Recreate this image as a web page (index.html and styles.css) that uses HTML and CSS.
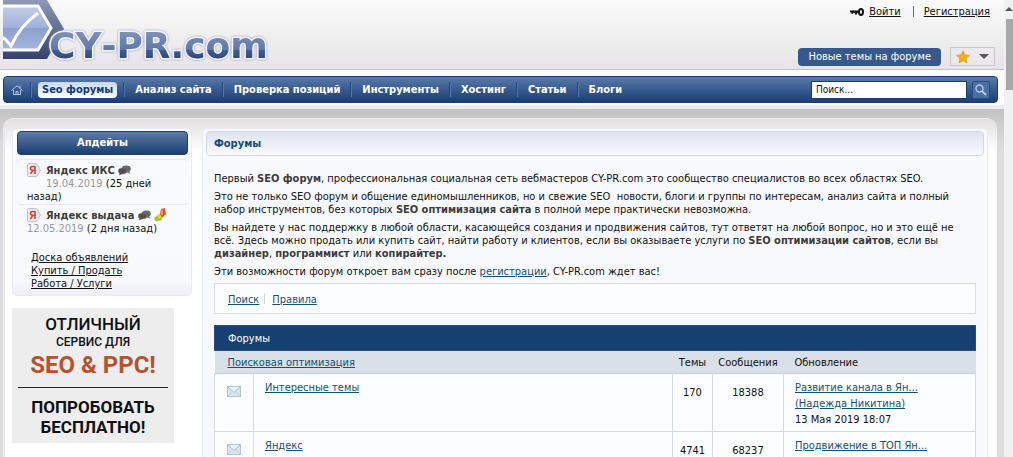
FILE: index.html
```html
<!DOCTYPE html>
<html lang="ru">
<head>
  <meta charset="UTF-8">
  <meta name="viewport" content="width=device-width, initial-scale=1.0">
  <title>SEO форум - CY-PR.com</title>
  <link rel="stylesheet" href="styles.css">
</head>
<body>

  <!-- Shared icons -->
  <svg class="sprite" aria-hidden="true">
    <symbol id="icon-yandex" viewBox="0 0 14 14">
      <path d="M.5 1.5Q.5.5 1.500.5H9.500L13.500 7L9.500 13.500H1.500Q.5 13.500.5 12.500Z" fill="#ececec" stroke="#c2c2c2"/>
      <path d="M8 3v8M8 3.500H5.500Q3.500 3.600 3.500 5.300T5.500 7.200H8M5.800 7.300L3.500 11" fill="none" stroke="#d8403c" stroke-width="1.600"/>
    </symbol>
    <symbol id="icon-talk" viewBox="0 0 13 11">
      <ellipse cx="8.300" cy="3.800" rx="4.500" ry="3.400" fill="#666"/>
      <path d="M10 5l2.500 4l-4-2z" fill="#666"/>
      <ellipse cx="4.600" cy="6" rx="4.400" ry="3" fill="#505050" stroke="#888" stroke-width=".5"/>
      <path d="M2 7.500L1 10.500L5 8.500z" fill="#505050"/>
    </symbol>
    <symbol id="icon-mail" viewBox="0 0 14 11">
      <rect x=".5" y=".5" width="13" height="10" fill="#dbe5f0" stroke="#b4c3d5"/>
      <path d="M1 1l6 5.500L13 1" fill="#edf3fa" stroke="#a8b9cd"/>
      <path d="M1 10l4.500-4.500M13 10L8.500 5.500" stroke="#c0cddd"/>
    </symbol>
  </svg>

  <div class="page">
    <header class="header">
      <a class="logo" href="#" aria-label="CY-PR.com">
        <svg width="276" height="64" viewBox="0 0 276 64">
          <defs>
            <linearGradient id="frame" x1="0" y1="0" x2="0" y2="1">
              <stop offset="0" stop-color="#8e99b8"/>
              <stop offset="1" stop-color="#34416b"/>
            </linearGradient>
            <linearGradient id="glass" x1="0" y1="0" x2="0" y2="1">
              <stop offset="0" stop-color="#c3cfe8"/>
              <stop offset=".5" stop-color="#9fb1da"/>
              <stop offset=".5" stop-color="#8c9fcd"/>
              <stop offset="1" stop-color="#a5b7df"/>
            </linearGradient>
            <linearGradient id="letters" x1="0" y1="0" x2="0" y2="1">
              <stop offset=".2" stop-color="#7d90b4"/>
              <stop offset=".6" stop-color="#5d78aa"/>
              <stop offset=".62" stop-color="#3f5c94"/>
              <stop offset=".85" stop-color="#2f4678"/>
            </linearGradient>
            <clipPath id="edge"><path d="M3 0H276V64H3Z"/></clipPath>
          </defs>
          <g clip-path="url(#edge)">
            <path d="M3 0H47L64 29L47 59H3Z" fill="url(#frame)"/>
            <path d="M-4 6H38L51 28L38 50H-4Z" fill="url(#glass)" stroke="#fff" stroke-width="3"/>
            <path d="M1 37L5 39L11 46Q20 26 38 13" fill="none" stroke="#fff" stroke-width="3"/>
          </g>
          <text class="logo-text" x="49" y="58" fill="url(#letters)">CY-PR.com</text>
        </svg>
      </a>
      <div class="header-right">
        <div class="login">
          <svg width="14" height="8" viewBox="0 0 14 8" aria-hidden="true">
            <path d="M0 2.500H9V5H7V6.500H5V5H3V6H1.500V4.500H0Z" fill="#111"/>
            <ellipse cx="11" cy="4" rx="2" ry="3" fill="none" stroke="#111" stroke-width="2"/>
          </svg>
          <a href="#">Войти</a>
          <span class="login-sep"></span>
          <a href="#">Регистрация</a>
        </div>
        <div class="header-tools">
          <button class="new-topics">Новые темы на форуме</button>
          <button class="bookmark" aria-label="В закладки">
            <svg width="14" height="14" viewBox="0 0 14 14" aria-hidden="true">
              <path d="M7 .8L8.900 4.900L13.400 5.400L10.100 8.500L11 13L7 10.700L3 13L3.900 8.500L.6 5.400L5.100 4.900Z" fill="#f5ad1b" stroke="#e79a25" stroke-width=".8"/>
            </svg>
            <svg width="10" height="5" viewBox="0 0 10 5" aria-hidden="true"><path d="M0 0H10L5 5Z" fill="#555"/></svg>
          </button>
        </div>
      </div>
    </header>

    <div class="nav-wrap">
      <nav class="nav">
        <a class="nav-home" href="#" aria-label="Главная">
          <svg width="12" height="10" viewBox="0 0 12 10" aria-hidden="true">
            <path d="M.5 5.500L6 .8L11.500 5.500M2.500 5V9.500H9.500V5M5 9.500V6.500H7V9.500M9 2.800V.5" fill="none" stroke="#b8c8e2"/>
          </svg>
        </a>
        <a class="active" href="#"><span>Seo форумы</span></a>
        <a href="#">Анализ сайта</a>
        <a href="#">Проверка позиций</a>
        <a href="#">Инструменты</a>
        <a href="#">Хостинг</a>
        <a href="#">Статьи</a>
        <a href="#">Блоги</a>
        <form class="search">
          <input type="text" value="Поиск..." aria-label="Поиск">
          <button type="button" aria-label="Найти">
            <svg width="12" height="12" viewBox="0 0 12 12" aria-hidden="true">
              <circle cx="4.500" cy="4.500" r="3.500" fill="none" stroke="#b4c9e6" stroke-width="1.400"/>
              <path d="M7 7l4 4" stroke="#b4c9e6" stroke-width="2"/>
            </svg>
          </button>
        </form>
      </nav>
    </div>

    <div class="backdrop">
      <div class="content">
        <aside class="sidebar">
          <section class="panel updates">
            <h2>Апдейты</h2>
            <div class="update update-tic">
              <div class="update-title">
                <svg width="14" height="14"><use href="#icon-yandex"/></svg>
                <strong>Яндекс ИКС</strong>
                <svg width="13" height="11"><use href="#icon-talk"/></svg>
              </div>
              <p><time>19.04.2019</time> (25 дней назад)</p>
            </div>
            <div class="update">
              <div class="update-title">
                <svg width="14" height="14"><use href="#icon-yandex"/></svg>
                <strong>Яндекс выдача</strong>
                <svg width="13" height="11"><use href="#icon-talk"/></svg>
                <svg width="12" height="14" viewBox="0 0 12 14" aria-hidden="true">
                  <path d="M1 9L7 6L8 12L2 13.500L0 11Z" fill="#a9c32b"/>
                  <path d="M3 7L7 5L8 9L5 11Z" fill="#f3cf2a"/>
                  <path d="M7 1L11 0L12 6L8 10L6 6Z" fill="#e1532c"/>
                  <path d="M7 2L9 1.500L9 7L7 7Z" fill="#f59a3a"/>
                </svg>
              </div>
              <p><time>12.05.2019</time> (2 дня назад)</p>
            </div>
            <div class="board-links">
              <a href="#">Доска объявлений</a>
              <a href="#">Купить / Продать</a>
              <a href="#">Работа / Услуги</a>
            </div>
          </section>

          <a class="banner" href="#">
            <span class="banner-top">ОТЛИЧНЫЙ</span>
            <span class="banner-small">СЕРВИС ДЛЯ</span>
            <span class="banner-big">SEO &amp; PPC!</span>
            <span class="banner-call">ПОПРОБОВАТЬ БЕСПЛАТНО!</span>
          </a>
        </aside>

        <main class="panel main">
          <h1>Форумы</h1>
          <div class="main-body">
            <div class="intro">
              <p>Первый <strong>SEO форум</strong>, профессиональная социальная сеть вебмастеров CY-PR.com это сообщество специалистов во всех областях SEO.</p>
              <p>Это не только SEO форум и общение единомышленников, но и свежие SEO&nbsp; новости, блоги и группы по интересам, анализ сайта и полный набор инструментов, без которых <strong>SEO оптимизация сайта</strong> в полной мере практически невозможна.</p>
              <p>Вы найдете у нас поддержку в любой области, касающейся создания и продвижения сайтов, тут ответят на любой вопрос, но и это ещё не всё. Здесь можно продать или купить сайт, найти работу и клиентов, если вы оказываете услуги по <strong>SEO оптимизации сайтов</strong>, если вы <strong>дизайнер</strong>, <strong>программист</strong> или <strong>копирайтер.</strong></p>
              <p>Эти возможности форум откроет вам сразу после <a href="#">регистрации</a>, CY-PR.com ждет вас!</p>
            </div>

            <div class="forum-links">
              <a href="#">Поиск</a>
              <a href="#">Правила</a>
            </div>

            <table class="forums">
              <colgroup>
                <col class="col-icon">
                <col>
                <col class="col-topics">
                <col class="col-posts">
                <col class="col-last">
              </colgroup>
              <thead>
                <tr class="forums-title">
                  <th colspan="5">Форумы</th>
                </tr>
                <tr class="forums-head">
                  <th colspan="2"><a href="#">Поисковая оптимизация</a></th>
                  <th class="num">Темы</th>
                  <th class="num">Сообщения</th>
                  <th>Обновление</th>
                </tr>
              </thead>
              <tbody>
                <tr>
                  <td class="icon"><svg width="14" height="11"><use href="#icon-mail"/></svg></td>
                  <td><a href="#">Интересные темы</a></td>
                  <td class="num">170</td>
                  <td class="num">18388</td>
                  <td><a href="#">Развитие канала в Ян...</a><br><a href="#">(Надежда Никитина)</a><br>13 Мая 2019 18:07</td>
                </tr>
                <tr>
                  <td class="icon"><svg width="14" height="11"><use href="#icon-mail"/></svg></td>
                  <td><a href="#">Яндекс</a></td>
                  <td class="num">4741</td>
                  <td class="num">68237</td>
                  <td><a href="#">Продвижение в ТОП Ян...</a><br><a href="#">(</a></td>
                </tr>
              </tbody>
            </table>
          </div>
        </main>
      </div>
    </div>
  </div>

  <div class="scrollbar" aria-hidden="true">
    <div class="scroll-arrow"></div>
    <div class="scroll-thumb"></div>
  </div>

</body>
</html>
```
FILE: styles.css
```css
body {
  margin: 0;
  display: flex;
  height: 100vh;
  overflow: hidden;
  background: #fff;
  color: #111;
  font-family: Tahoma, "DejaVu Sans Condensed", "DejaVu Sans", sans-serif;
  font-size: 11px;
  line-height: 13px;
}

* {
  box-sizing: border-box;
}

.sprite {
  display: none;
}

input,
button {
  font: inherit;
}

p,
h1,
h2 {
  margin: 0;
}

.page {
  flex: 1;
  min-width: 0;
  display: flex;
  flex-direction: column;
}

/* Header */
.header {
  display: flex;
  justify-content: space-between;
  height: 70px;
  flex: none;
  border-bottom: 1px solid #c3c2c5;
  background: linear-gradient(#fbfbfb, #e6e4e6);
}

.logo svg {
  display: block;
}

.logo-text {
  font-family: Verdana, "DejaVu Sans", sans-serif;
  font-size: 36px;
  font-weight: bold;
  font-kerning: none;
  stroke: #f4f5fa;
  stroke-width: 3px;
  paint-order: stroke;
  filter: drop-shadow(0 0 1px #8d9ab8);
}

.header-right {
  display: flex;
  flex-direction: column;
  justify-content: space-between;
  align-items: flex-end;
  padding: 5px 9px 3px 0;
}

.login {
  display: flex;
  align-items: center;
  padding-right: 5px;
}

.login a {
  color: #111;
  margin-left: 5px;
}

.login-sep {
  width: 1px;
  height: 11px;
  margin: 0 5px 0 12px;
  background: #667;
}

.header-tools {
  display: flex;
  align-items: center;
  gap: 9px;
}

.new-topics {
  height: 18px;
  padding: 0 10px;
  border: 0;
  border-radius: 4px;
  background: #36588c;
  color: #fff;
}

.bookmark {
  display: flex;
  align-items: center;
  justify-content: space-between;
  width: 45px;
  height: 19px;
  padding: 0 5px;
  border: 1px solid #c9c9c9;
  background: #ebe9eb;
}

/* Navigation */
.nav-wrap {
  padding: 6px 6px 2px 3px;
  border-bottom: 4px solid #ebecef;
}

.nav {
  display: flex;
  align-items: center;
  height: 27px;
  border: 1px solid #1b3d70;
  border-radius: 4px;
  background: linear-gradient(#5c7ba6, #3a5d93 45%, #1b3f74);
}

.nav > a {
  padding: 1px 10px 1px 11px;
  border-left: 1px solid #24477b;
  box-shadow: inset 1px 0 #55759f;
  color: #fff;
  font-weight: bold;
  text-decoration: none;
  white-space: nowrap;
}

.nav > .nav-home {
  display: flex;
  padding: 0 7px;
  border: 0;
  box-shadow: none;
}

.nav > .active {
  padding: 0 6px 0 7px;
}

.active span {
  display: block;
  padding: 1px 4px 2px;
  border-radius: 4px;
  background: linear-gradient(#c9d8ea, #fff);
  color: #153c70;
}

.search {
  display: flex;
  gap: 5px;
  margin: 0 7px 0 auto;
}

.search input {
  width: 156px;
  height: 18px;
  padding: 0 4px;
  border: 1px solid #1b3b6b;
  background: #fff;
  color: #111;
  font-size: 10px;
}

.search button {
  display: flex;
  align-items: center;
  justify-content: center;
  width: 18px;
  height: 18px;
  padding: 0;
  border: 1px solid #294e83;
  border-radius: 2px;
  background: #4b6ea3;
}

/* Content area */
.backdrop {
  flex: 1;
  min-height: 0;
  padding: 9px 7px 0 3px;
  background: linear-gradient(#c2c2c2, #dedede 40px);
}

.content {
  display: flex;
  align-items: flex-start;
  gap: 10px;
  min-height: 100%;
  padding: 9px 9px 0;
  border: 2px solid #eaeaea;
  border-width: 1px 0 0 2px;
  border-radius: 10px 10px 0 0;
  background: linear-gradient(#e2dfe0, #fff 32px);
}

.panel {
  border: 1px solid #e8ebf5;
  border-radius: 5px;
  background: #f8f9fd;
}

.sidebar {
  flex: none;
  width: 180px;
  margin-left: -2px;
}

.updates {
  padding: 2px 3px 5px 4px;
  background: linear-gradient(#fff, #f9fafd 30px, #f8f9fd 150px, #edf0f8);
}

.updates h2 {
  height: 24px;
  border: 1px solid #1b3d70;
  border-radius: 4px;
  background: linear-gradient(#5c7ba6, #1b3f74);
  color: #fff;
  font-size: 11px;
  line-height: 22px;
  text-align: center;
}

.update {
  padding: 3px 10px 1px;
}

.update-tic {
  margin-top: 4px;
  border-top: 1px solid #e6e9f4;
  border-bottom: 1px solid #e6e9f4;
  border-radius: 4px;
}

.update-title {
  display: flex;
  align-items: center;
  height: 14px;
  gap: 3px;
}

.update-title strong {
  margin-left: 2px;
}

.update-tic p {
  text-indent: 19px;
}

.update time {
  color: #999;
}

strong {
  color: #3c3c3c;
}

.board-links {
  display: flex;
  flex-direction: column;
  align-items: flex-start;
  padding: 15px 14px 0;
}

.board-links a {
  color: #111;
}

/* Banner */
.banner {
  display: flex;
  flex-direction: column;
  align-items: center;
  width: 162px;
  height: 135px;
  margin-top: 12px;
  padding: 6px;
  background: #ededed;
  color: #111;
  font-family: Roboto, sans-serif;
  text-align: center;
  text-decoration: none;
}

.banner-top {
  font-size: 17px;
  font-weight: 500;
  line-height: 20px;
}

.banner-small {
  font-size: 12px;
  font-weight: 500;
  line-height: 16px;
}

.banner-big {
  color: #b5532f;
  font-size: 24px;
  font-weight: bold;
  line-height: 30px;
}

.banner-call {
  margin-top: 7px;
  padding-top: 9px;
  border-top: 1px solid #222;
  font-size: 17px;
  font-weight: bold;
  line-height: 20px;
}

/* Forum panel */
.main {
  flex: 1;
  min-width: 0;
  padding: 2px 3px;
}

.main h1 {
  height: 25px;
  padding: 0 7px;
  border: 1px solid #d2d8e8;
  border-radius: 4px;
  background: linear-gradient(#dfe3f0, #f8faff);
  color: #17497b;
  font-size: 11px;
  line-height: 23px;
}

.main-body {
  padding: 16px 8px;
}

.main a {
  color: #17506f;
}

.intro {
  margin-right: 12px;
}

.intro p {
  margin-bottom: 5px;
}

.forum-links {
  display: flex;
  height: 31px;
  padding: 9px 13px;
  border: 1px solid #d8dde6;
  background: #fcfdff;
}

.forum-links a + a {
  margin-left: 5px;
  padding-left: 7px;
  border-left: 1px solid #d0d7e0;
}

/* Forum list */
.forums {
  width: 100%;
  margin-top: 11px;
  border-collapse: collapse;
  table-layout: fixed;
  background: #fbfdff;
}

.col-icon {
  width: 39px;
}

.col-topics {
  width: 40px;
}

.col-posts {
  width: 71px;
}

.col-last {
  width: 192px;
}

.forums th {
  padding: 0 11px;
  font-weight: normal;
  text-align: left;
}

.forums-title th {
  height: 25px;
  padding: 0 13px;
  border: 1px solid #2a5080;
  background: #163f72;
  color: #fff;
}

.forums-head th {
  height: 23px;
  border-bottom: 1px solid #c5cdd8;
  background: #d9e0e8;
}

.forums-head th:first-child {
  padding-left: 13px;
}

.forums td {
  height: 57px;
  padding: 6px 11px 3px;
  border: 1px solid #d5dbe4;
  line-height: 16px;
  vertical-align: top;
}

.forums .num {
  padding-left: 0;
  padding-right: 0;
  text-align: center;
}

.forums td.num {
  padding-top: 11px;
}

.forums td.icon {
  padding: 12px 0 0;
  text-align: center;
}

.icon svg {
  display: block;
  margin: 0 auto;
}

/* Scrollbar */
.scrollbar {
  display: flex;
  flex-direction: column;
  align-items: flex-end;
  flex: none;
  width: 9px;
  padding-top: 7px;
  background: #f1f1f1;
}

.scroll-arrow {
  border: 4px solid transparent;
  border-top: 0;
  border-bottom: 4px solid #555;
}

.scroll-thumb {
  width: 7px;
  height: 71px;
  margin-top: 8px;
  background: #a8a8a8;
}
```
